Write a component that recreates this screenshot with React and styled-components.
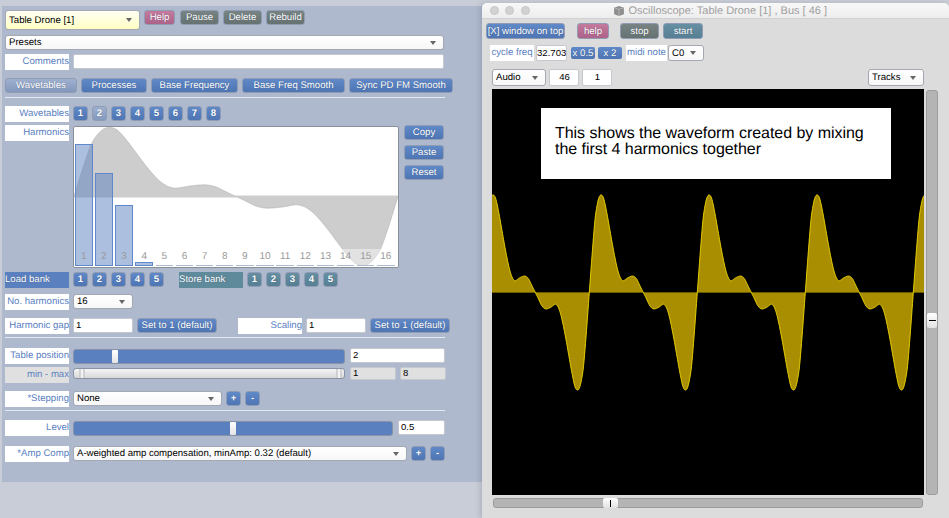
import React from "react";
import styled, { createGlobalStyle } from "styled-components";

const Global = createGlobalStyle`
  html, body { margin: 0; padding: 0; background: #c9cdd7; overflow: hidden; }
  * { box-sizing: border-box; }
  body { font-family: "Liberation Sans", Arial, sans-serif; font-size: 9.6px; text-rendering: geometricPrecision; }
`;

const BLUE = "#5a80bf";
const tones = {
  blue: ["#6089c8", "#4f75b3"],
  active: ["#9fb0cf", "#8398bd"],
  pink: ["#c27a9d", "#ad6389"],
  grey: ["#788484", "#667272"],
  teal: ["#668fa3", "#567f93"],
};

const Page = styled.div`
  width: 949px;
  height: 518px;
  display: flex;
  align-items: flex-start;
  overflow: hidden;
`;
const Panel = styled.div`
  margin: 6px 0 0 2px;
  width: 480px;
  height: 476px;
  padding: 4px 0 0 3px;
  background: #aeb9cd;
  color: #000;
`;
const Row = styled.div`
  display: flex;
  align-items: flex-start;
  gap: ${(p) => p.$gap ?? 4}px;
  margin-top: ${(p) => p.$mt ?? 0}px;
`;
const Btn = styled.div`
  display: flex;
  align-items: center;
  justify-content: center;
  flex: none;
  width: ${(p) => p.$w}px;
  height: ${(p) => p.$h ?? 15}px;
  margin-left: ${(p) => p.$ml ?? 0}px;
  color: #fff;
  font-size: 9.6px;
  white-space: nowrap;
  text-shadow: 0 0 1px rgba(20, 30, 60, 0.45);
  border: 1px solid #8f9cb3;
  border-radius: 3px;
  background: linear-gradient(${(p) => tones[p.$tone ?? "blue"][0]}, ${(p) => tones[p.$tone ?? "blue"][1]});
`;
const NumBtn = styled(Btn)`
  width: 15px;
  font-weight: 700;
`;
const Label = styled.div`
  flex: none;
  width: ${(p) => p.$w ?? 64}px;
  height: ${(p) => p.$h ?? 16}px;
  margin-left: ${(p) => p.$ml ?? 0}px;
  line-height: 15px;
  text-align: ${(p) => p.$align ?? "right"};
  white-space: nowrap;
  overflow: hidden;
  color: ${(p) => p.$color ?? BLUE};
  background: ${(p) => p.$bg ?? "#fff"};
`;
const BankLabel = styled(Label)`
  text-align: left;
  color: #fff;
  text-shadow: 0 0 1px rgba(20, 30, 60, 0.5);
`;
const Field = styled.input`
  flex: none;
  display: block;
  width: ${(p) => p.$w}px;
  height: ${(p) => p.$h ?? 16}px;
  margin: 0 0 0 ${(p) => p.$ml ?? 0}px;
  padding: ${(p) => p.$pad ?? "0 1px 2px 2px"};
  font: 9.6px "Liberation Sans", Arial, sans-serif;
  text-align: ${(p) => p.$align ?? "left"};
  color: #000;
  background: ${(p) => p.$bg ?? "#fff"};
  border: 1px solid #c5c8ce;
  border-radius: 2px;
  outline: none;
`;
const SelectBox = styled.div`
  flex: none;
  display: flex;
  align-items: center;
  justify-content: space-between;
  width: ${(p) => p.$w}px;
  height: ${(p) => p.$h ?? 15}px;
  margin-left: ${(p) => p.$ml ?? 0}px;
  padding: 0 7px 0 3px;
  color: #000;
  white-space: nowrap;
  background: ${(p) => p.$bg ?? "linear-gradient(#fff, #f7f7f7)"};
  border: 1px solid #a3a8b2;
  border-radius: 3px;
`;
const Caret = styled.span`
  flex: none;
  width: 0;
  height: 0;
  border-left: 3.5px solid transparent;
  border-right: 3.5px solid transparent;
  border-top: 4px solid #666;
`;
const Select = ({ children, ...rest }) => (
  <SelectBox {...rest}>
    <span>{children}</span>
    <Caret />
  </SelectBox>
);
const Divider = styled.div`
  width: 440px;
  height: 1px;
  margin-top: ${(p) => p.$mt}px;
  background: #e4e8f0;
`;
const Track = styled.div`
  position: relative;
  flex: none;
  width: ${(p) => p.$w}px;
  height: ${(p) => p.$h ?? 15}px;
  margin-top: ${(p) => p.$mt ?? 0}px;
  border: 1px solid #8893a8;
  border-radius: 3px;
  background: ${(p) => p.$bg ?? BLUE};
`;
const Knob = styled.span`
  position: absolute;
  top: 0;
  bottom: 0;
  width: 6px;
  transform: translateX(-50%);
  background: linear-gradient(#fff, #e4e4e4);
  border-radius: 1px;
`;
const ThinKnob = styled(Knob)`
  width: 5px;
  background: #f3f3f3;
  border-left: 1px solid #b4b4b4;
  border-right: 1px solid #b4b4b4;
  border-radius: 0;
`;
const Slider = ({ w, value, ...rest }) => (
  <Track $w={w} {...rest}>
    <Knob style={{ left: `${value * 100}%` }} />
  </Track>
);
const CanvasBox = styled.div`
  position: relative;
  flex: none;
  width: 326px;
  height: 142px;
  margin-top: 1px;
  background: #fff;
  border: 1px solid #8a8f98;
  border-radius: 2px;
  overflow: hidden;
`;
const CanvasLayer = styled.svg`
  position: absolute;
  left: 0;
  top: 0;
  display: block;
`;
const NumberBand = styled.div`
  position: absolute;
  left: 0;
  right: 0;
  bottom: 0;
  height: 18px;
  background: rgba(255, 255, 255, 0.42);
`;
const Bars = styled.div`
  position: absolute;
  left: 1px;
  bottom: 1px;
  display: flex;
  gap: 2.65px;
  align-items: flex-end;
`;
const Bar = styled.div`
  width: 17.5px;
  background: ${(p) => (p.$empty ? "none" : "rgba(90, 128, 191, 0.5)")};
  border: ${(p) => (p.$empty ? "0" : "1px")} solid #6088cc;
  ${(p) => p.$empty && "border-top: 1px solid #aebbd2;"}
`;
const BarNum = styled.span`
  position: absolute;
  left: -6px;
  right: -6px;
  bottom: 4px;
  text-align: center;
  font-size: 10px;
  line-height: 11px;
  color: #999;
`;
const BarSlot = styled.div`
  position: relative;
  width: 17.5px;
`;
const SideButtons = styled.div`
  display: flex;
  flex-direction: column;
  gap: 5px;
  margin-left: 1px;
`;

/* Oscilloscope window */
const Win = styled.div`
  flex: none;
  width: 467px;
  height: 515px;
  margin-top: 3px;
  background: #dcdcdc;
  border-radius: 5px 5px 0 0;
  box-shadow: -2px 0 5px rgba(60, 60, 80, 0.18);
`;
const TitleBar = styled.div`
  display: flex;
  align-items: center;
  height: 16px;
  padding-left: 7.5px;
  background: linear-gradient(#f8f8f8, #ededed);
  border-radius: 5px 5px 0 0;
  border-bottom: 1px solid #d2d2d2;
  color: #a0a0a0;
`;
const Lights = styled.div`
  display: flex;
  gap: 6.5px;
`;
const Light = styled.span`
  width: 9px;
  height: 9px;
  border-radius: 50%;
  background: #d2d2d2;
  border: 1px solid #c6c6c6;
`;
const TitleText = styled.div`
  display: flex;
  align-items: center;
  gap: 4px;
  margin-left: 83px;
  white-space: nowrap;
  font-size: 11px;
`;
const WinRow = styled.div`
  display: flex;
  align-items: flex-start;
  gap: ${(p) => p.$gap ?? 4}px;
  height: ${(p) => p.$h}px;
  margin-top: ${(p) => p.$mt}px;
  padding-left: ${(p) => p.$pl}px;
`;
const MiniBtn = styled(Btn)`
  border: none;
  margin-top: 2px;
  height: 12px;
  border-radius: 2px;
`;
const PushRight = styled.div`
  margin-left: auto;
  padding-right: 25px;
`;
const ScopeRow = styled.div`
  display: flex;
  align-items: stretch;
  gap: 1px;
  height: 406px;
  margin-top: 3px;
  padding-left: 10px;
`;
const Scope = styled.div`
  position: relative;
  flex: none;
  width: 432px;
  height: 406px;
  background: #000;
  overflow: hidden;
`;
const ScopeSvg = styled.svg`
  display: block;
`;
const Note = styled.div`
  position: absolute;
  left: 49px;
  top: 19px;
  width: 350px;
  height: 71px;
  padding: 18px 14px 0;
  background: #fff;
  color: #000;
  font-size: 16px;
  line-height: 16px;
  letter-spacing: -0.04px;
`;
const VTrack = styled.div`
  position: relative;
  width: 12px;
  margin-left: 1px;
  margin-top: 1px;
  height: 405px;
  background: #b4b4b4;
  border: 1px solid #9c9c9c;
  border-radius: 3px;
`;
const VKnob = styled.div`
  position: absolute;
  left: 0;
  right: 0;
  height: 15px;
  background: linear-gradient(#fff, #e2e2e2);
  border-radius: 2px;
  display: flex;
  align-items: center;
  justify-content: center;
`;
const VTick = styled.span`
  width: 7px;
  height: 1px;
  background: #000;
`;
const HTrack = styled.div`
  position: relative;
  width: 430px;
  height: 10px;
  margin: 3px 0 0 11px;
  background: #b4b4b4;
  border: 1px solid #9c9c9c;
  border-radius: 3px;
`;
const HKnob = styled.div`
  position: absolute;
  top: -1px;
  bottom: -1px;
  width: 15px;
  background: linear-gradient(#fff, #e2e2e2);
  border-radius: 2px;
  display: flex;
  align-items: center;
  justify-content: center;
`;
const HTick = styled.span`
  width: 1px;
  height: 7px;
  background: #000;
`;

/* One half of the wave, phase 0 to 0.5 from rising zero; the other half is its point mirror. */
const HALF = [
  [0, 0], [0.028, 0.42], [0.052, 0.74], [0.068, 0.87], [0.09, 0.975], [0.111, 1], [0.133, 0.965],
  [0.16, 0.83], [0.19, 0.645], [0.213, 0.5], [0.238, 0.355], [0.262, 0.235], [0.284, 0.16],
  [0.3, 0.13], [0.315, 0.12], [0.361, 0.154], [0.407, 0.168], [0.44, 0.135], [0.475, 0.055], [0.5, 0],
];
const halfAt = (t) => {
  let i = 0;
  while (i < HALF.length - 2 && HALF[i + 1][0] < t) i++;
  const a = HALF[Math.max(i - 1, 0)], b = HALF[i], c = HALF[i + 1], d = HALF[Math.min(i + 2, HALF.length - 1)];
  const h = c[0] - b[0];
  const u = (t - b[0]) / h;
  const m1 = ((c[1] - a[1]) / (c[0] - a[0])) * h;
  const m2 = ((d[1] - b[1]) / (d[0] - b[0])) * h;
  return (2*u*u*u - 3*u*u + 1) * b[1] + (u*u*u - 2*u*u + u) * m1 + (-2*u*u*u + 3*u*u) * c[1] + (u*u*u - u*u) * m2;
};
const wave = (phase) => {
  const t = ((phase % 1) + 1) % 1;
  return t <= 0.5 ? halfAt(t) : -halfAt(1 - t);
};
const wavePoints = (width, x0, period, zero, amp) => {
  const pts = [];
  for (let x = 0; x <= width; x += 0.5) {
    pts.push(`${x},${(zero - amp * wave((x - x0) / period)).toFixed(2)}`);
  }
  return pts.join(" ");
};

const harmonics = [122, 93, 61, 4, 0, 0, 0, 0, 0, 0, 0, 0, 0, 0, 0, 0];

function Harmonics() {
  const line = wavePoints(324, 0, 324, 69.5, 69);
  return (
    <CanvasBox>
      <CanvasLayer width="324" height="140">
        <polygon points={`0,69.5 ${line} 324,69.5`} fill="#cdcdcd" stroke="#b0b0b0" strokeWidth="0.6" />
        <rect x="0" y="68.5" width="324" height="2" fill="#cdcdcd" />
      </CanvasLayer>
      <NumberBand />
      <Bars>
        {harmonics.map((h, i) => (
          <BarSlot key={i}>
            <Bar $empty={h === 0} style={{ height: h === 0 ? 1 : h }} />
            <BarNum>{i + 1}</BarNum>
          </BarSlot>
        ))}
      </Bars>
    </CanvasBox>
  );
}

const CubeIcon = () => (
  <svg width="12" height="12" viewBox="0 0 11 11">
    <path d="M1 2.5 5.5 1 10 2.5v6L5.5 10 1 8.5z" fill="#8e8e8e" />
    <path d="M1 2.5 5.5 4 10 2.5M5.5 4v6" fill="none" stroke="#bdbdbd" strokeWidth="0.7" />
  </svg>
);

const nums = (n) => Array.from({ length: n }, (_, i) => i + 1);

export default function App() {
  const line = wavePoints(432, -10.7, 108, 203.5, 97.5);
  return (
    <Page>
      <Global />
      <Panel>
        <Row>
          <Select $w={135} $h={20} $bg="linear-gradient(#fffff4, #ffffc4)">Table Drone [1]</Select>
          <Btn $w={31} $tone="pink">Help</Btn>
          <Btn $w={39} $ml={1} $tone="grey">Pause</Btn>
          <Btn $w={39} $tone="grey">Delete</Btn>
          <Btn $w={39} $tone="grey">Rebuild</Btn>
        </Row>
        <Row $mt={5}>
          <Select $w={439}>Presets</Select>
        </Row>
        <Row $mt={4}>
          <Label>Comments</Label>
          <Field $w={371} $h={15} readOnly value="" />
        </Row>
        <Row $mt={8}>
          <Btn $w={72} $tone="active">Wavetables</Btn>
          <Btn $w={66}>Processes</Btn>
          <Btn $w={87}>Base Frequency</Btn>
          <Btn $w={103}>Base Freq Smooth</Btn>
          <Btn $w={104}>Sync PD FM Smooth</Btn>
        </Row>
        <Divider $mt={4} />
        <Row $mt={8}>
          <Label>Wavetables</Label>
          {nums(8).map((n) => (
            <NumBtn key={n} $tone={n === 2 ? "active" : "blue"}>{n}</NumBtn>
          ))}
        </Row>
        <Row $mt={3}>
          <Label>Harmonics</Label>
          <Harmonics />
          <SideButtons>
            <Btn $w={40}>Copy</Btn>
            <Btn $w={40}>Paste</Btn>
            <Btn $w={40}>Reset</Btn>
          </SideButtons>
        </Row>
        <Row $mt={4}>
          <BankLabel $bg={BLUE}>Load bank</BankLabel>
          {nums(5).map((n) => <NumBtn key={n}>{n}</NumBtn>)}
          <BankLabel $bg="#5f8a9c" $ml={11}>Store bank</BankLabel>
          {nums(5).map((n) => <NumBtn key={n} $tone="teal">{n}</NumBtn>)}
        </Row>
        <Row $mt={6}>
          <Label>No. harmonics</Label>
          <Select $w={60}>16</Select>
        </Row>
        <Row $mt={8}>
          <Label>Harmonic gap</Label>
          <Field $w={60} $h={15} readOnly value="1" />
          <Btn $w={80}>Set to 1 (default)</Btn>
          <Label $ml={17}>Scaling</Label>
          <Field $w={60} $h={15} readOnly value="1" />
          <Btn $w={80}>Set to 1 (default)</Btn>
        </Row>
        <Divider $mt={3} />
        <Row $mt={10}>
          <Label>Table position</Label>
          <Slider w={272} value={0.15} $mt={1} />
          <Field $w={95} $h={15} $ml={1} readOnly value="2" />
        </Row>
        <Row $mt={3}>
          <Label $bg="#e0e0e0">min - max</Label>
          <Track $w={272} $h={11} $mt={1} $bg="linear-gradient(#f4f4f4, #d8d8d8)">
            <ThinKnob style={{ left: "3%" }} />
            <ThinKnob style={{ left: "98%" }} />
          </Track>
          <Field $w={46} $h={13} $ml={1} $bg="#e0e0e0" readOnly value="1" />
          <Field $w={46} $h={13} $bg="#e0e0e0" readOnly value="8" />
        </Row>
        <Row $mt={8}>
          <Label>*Stepping</Label>
          <Select $w={149}>None</Select>
          <NumBtn>+</NumBtn>
          <NumBtn>-</NumBtn>
        </Row>
        <Divider $mt={3} />
        <Row $mt={9}>
          <Label>Level</Label>
          <Slider w={320} value={0.5} $mt={1} />
          <Field $w={47} $h={15} $ml={1} readOnly value="0.5" />
        </Row>
        <Row $mt={10}>
          <Label>*Amp Comp</Label>
          <Select $w={334}>A-weighted amp compensation, minAmp: 0.32 (default)</Select>
          <NumBtn>+</NumBtn>
          <NumBtn>-</NumBtn>
        </Row>
      </Panel>

      <Win>
        <TitleBar>
          <Lights><Light /><Light /><Light /></Lights>
          <TitleText><CubeIcon />Oscilloscope: Table Drone [1] , Bus [ 46 ]</TitleText>
        </TitleBar>
        <WinRow $h={16} $mt={4} $pl={4} $gap={12}>
          <Btn $w={79} $h={16}>[X] window on top</Btn>
          <Btn $w={32} $h={16} $tone="pink">help</Btn>
          <Btn $w={39} $h={16} $ml={-1} $tone="grey">stop</Btn>
          <Btn $w={40} $h={16} $ml={-8} $tone="teal">start</Btn>
        </WinRow>
        <WinRow $h={16} $mt={6} $pl={8} $gap={2}>
          <Label $w={44} $align="center">cycle freq</Label>
          <Field $w={31} $align="center" $pad="0 0 2px" readOnly value="32.703" />
          <MiniBtn $w={24} $ml={2}>x 0.5</MiniBtn>
          <MiniBtn $w={24} $ml={1}>x 2</MiniBtn>
          <Label $w={41} $ml={2} $align="center">midi note</Label>
          <Select $w={36} $h={16} $ml={-1}>C0</Select>
        </WinRow>
        <WinRow $h={17} $mt={8} $pl={10} $gap={3}>
          <Select $w={54} $h={17}>Audio</Select>
          <Field $w={30} $h={17} $align="center" readOnly value="46" />
          <Field $w={30} $h={17} $align="center" readOnly value="1" />
          <PushRight>
            <Select $w={56} $h={17}>Tracks</Select>
          </PushRight>
        </WinRow>
        <ScopeRow>
          <Scope>
            <ScopeSvg width="432" height="406">
              <polygon points={`0,203.5 ${line} 432,203.5`} fill="#a88e00" />
              <rect x="0" y="203" width="432" height="1" fill="#6a5a00" />
              <polyline points={line} fill="none" stroke="#f4da00" strokeWidth="0.9" />
            </ScopeSvg>
            <Note>This shows the waveform created by mixing<br />the first 4 harmonics together</Note>
          </Scope>
          <VTrack>
            <VKnob style={{ top: `${(223 / 405) * 100}%` }}><VTick /></VKnob>
          </VTrack>
        </ScopeRow>
        <HTrack>
          <HKnob style={{ left: `${(110 / 430) * 100}%` }}><HTick /></HKnob>
        </HTrack>
      </Win>
    </Page>
  );
}
